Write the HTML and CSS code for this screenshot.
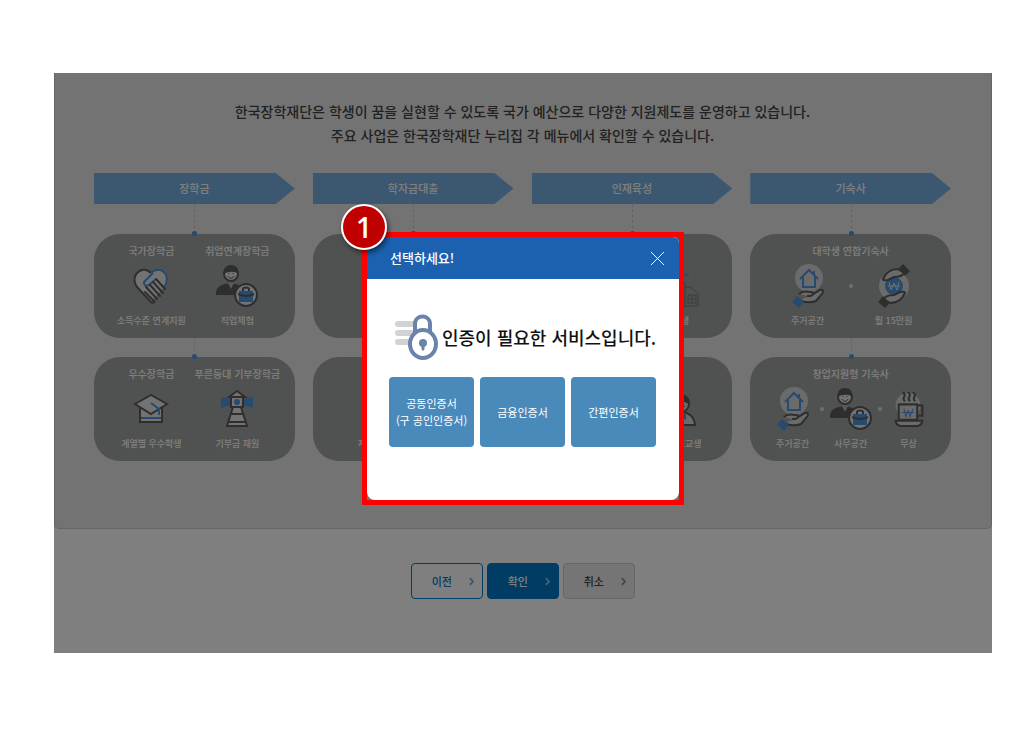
FILE: index.html
```
<!DOCTYPE html>
<html lang="ko">
<head>
    <meta charset="UTF-8">
    <meta name="viewport" content="width=device-width, initial-scale=1.0">
    <title>한국장학재단</title>
    <link rel="stylesheet" href="styles.css">
</head>
<body>
    <!-- Shared icons -->
    <svg class="sprite" aria-hidden="true">
        <symbol id="iconHeart" viewBox="0 0 36 36">
            <path d="M18 34 L4 19 C-1 12 2 4 9 2 C13 1 16 3 18 5 C20 3 23 1 27 2 C34 4 36 12 31 19 Z" fill="#e6e6e6"/>
            <path d="M18 5 C16 3 13 1 9 2 C2 4 -1 12 4 19 L18 34 Q20 36 22 33" fill="none" stroke="#5c5c5c" stroke-width="2"/>
            <path d="M18 5 C20 3 23 1 27 2 C34 4 36 12 31 19 M20 5 L11 14 C11 19 15 18 17 16 L23 11" fill="none" stroke="#4f96dc" stroke-width="2"/>
            <path d="M23 11 L32 21 M20 14 L30 25 M17 17 L27 28 M13 19 L24 31 M12 24 L21 33" fill="none" stroke="#5c5c5c" stroke-width="2" stroke-linecap="round"/>
        </symbol>
        <symbol id="iconWorker" viewBox="0 0 42 42">
            <path d="M0 30 V27 C1 21 6 19 14 18 C22 19 27 21 28 30 Z" fill="#5c5c5c"/>
            <circle cx="15" cy="9" r="7" fill="#e6e6e6" stroke="#5c5c5c" stroke-width="2"/>
            <path d="M8 9 C7 2 11 0 15 0 C20 0 23 3 22 9 C20 6 12 6 8 9 Z" fill="#5c5c5c"/>
            <path d="M12 11 C13 14 17 14 18 11 M13 8 V9 M17 8 V9" fill="none" stroke="#5c5c5c"/>
            <path d="M12 18 L15 24 L18 18 Z" fill="#b5b5b5"/>
            <circle cx="30" cy="30" r="11" fill="#e6e6e6" stroke="#5c5c5c" stroke-width="2"/>
            <path d="M23 26 H37 V37 H23 Z" fill="#4f96dc"/>
            <path d="M27 26 V24 C27 22 33 22 33 24 V26 M22 29 Q30 33 38 29" fill="none" stroke="#5c5c5c" stroke-width="2"/>
        </symbol>
        <symbol id="iconCap" viewBox="0 0 34 30">
            <path d="M6 13 V28 H28 V13" fill="#e6e6e6" stroke="#5c5c5c" stroke-width="2"/>
            <path d="M7 24 H27" stroke="#4f96dc" stroke-width="2"/>
            <path d="M1 10 L17 1 L33 10 L17 20 Z" fill="#e6e6e6" stroke="#5c5c5c" stroke-width="2"/>
            <path d="M17 9 L25 15 V21" fill="none" stroke="#4f96dc" stroke-width="2"/>
        </symbol>
        <symbol id="iconLight" viewBox="0 0 32 38">
            <path d="M0 7 L9 9 V15 L0 18 Z M32 7 L23 9 V15 L32 18 Z" fill="#4f96dc"/>
            <path d="M12 17 H20 L26 36 H6 Z" fill="#e6e6e6" stroke="#5c5c5c" stroke-width="2"/>
            <path d="M10 24 H22 M8 32 H24" stroke="#5c5c5c" stroke-width="2"/>
            <path d="M10 7 H22 V17 H10 Z M8 7 L16 1 L24 7 Z" fill="#e6e6e6" stroke="#5c5c5c" stroke-width="2"/>
            <circle cx="16" cy="12" r="3" fill="#4f96dc"/>
        </symbol>
        <symbol id="iconHouse" viewBox="0 0 32 44">
            <circle cx="17" cy="14" r="14" fill="#d6d6d6"/>
            <path d="M8 15 L17 6 L26 15 M11 13 V23 H23 V13 M22 10 V7" fill="none" stroke="#4f96dc" stroke-width="2"/>
            <path d="M7 30 C11 26 15 28 19 28 C22 28 22 31 18 32 H15 M20 31 L28 26 C31 25 32 27 30 30 L24 37 C20 39 15 38 12 38 L8 36" fill="#d6d6d6" stroke="#5c5c5c" stroke-width="2"/>
            <path d="M0 38 L5 32 L12 38 L7 44 Z" fill="#4f96dc"/>
        </symbol>
        <symbol id="iconWon" viewBox="0 0 32 44">
            <circle cx="16" cy="22" r="15" fill="#d6d6d6"/>
            <circle cx="16" cy="22" r="9" fill="#4f96dc"/>
            <path d="M11 18 L13 26 L16 19 L19 26 L21 18 M10 22 H22" fill="none" stroke="#e0e0e0" stroke-width="1"/>
            <path d="M5 15 C9 6 15 5 20 5 L26 9 C24 13 19 13 16 13 L10 16 Q5 17 5 15 Z" fill="#d6d6d6" stroke="#5c5c5c" stroke-width="2"/>
            <path d="M27 29 C23 38 17 39 12 39 L6 35 C8 31 13 31 16 31 L22 28 Q27 27 27 29 Z" fill="#d6d6d6" stroke="#5c5c5c" stroke-width="2"/>
            <path d="M21 4 L25 0 L32 7 L27 12 Z M11 40 L7 44 L0 38 L5 32 Z" fill="#5c5c5c"/>
        </symbol>
        <symbol id="iconCup" viewBox="0 0 28 36">
            <circle cx="13" cy="14" r="12" fill="#d6d6d6"/>
            <path d="M8 1 Q11 4 9 6 Q8 8 10 10 M13 1 Q16 4 14 6 Q13 8 15 10 M18 1 Q21 4 19 6 Q18 8 20 10" fill="none" stroke="#5c5c5c" stroke-width="2"/>
            <path d="M22 14 H27 V24 H22" fill="none" stroke="#5c5c5c" stroke-width="2"/>
            <path d="M4 13 H22 V28 H4 Z M1 29 H27 Q26 34 22 34 H6 Q2 34 1 29 Z" fill="#d6d6d6" stroke="#5c5c5c" stroke-width="2"/>
            <path d="M9 17 L11 25 L13 19 L15 25 L18 17 M7 21 H19" fill="none" stroke="#4f96dc" stroke-width="1"/>
        </symbol>
        <symbol id="iconSchool" viewBox="0 0 36 36">
            <path d="M1 35 V22 L9 16 M35 35 V22 L27 16 H22 M1 35 H35 M10 35 V13 L18 8 L22 12 V35" fill="none" stroke="#777"/>
            <path d="M18 8 V1 L26 4 L18 6" fill="none" stroke="#4f96dc"/>
            <path d="M25 24 H33 V32 H25 Z M25 28 H33 M29 24 V32" fill="none" stroke="#777"/>
        </symbol>
        <symbol id="iconStudent" viewBox="0 0 30 32">
            <path d="M1 31 Q1 19 15 18 Q28 19 29 31 Z" fill="#d6d6d6" stroke="#5c5c5c" stroke-width="2"/>
            <circle cx="15" cy="10" r="8" fill="#d6d6d6" stroke="#5c5c5c" stroke-width="2"/>
            <path d="M6 10 C5 -3 25 -3 24 10 Q17 8 14 5 Q11 9 6 10 Z" fill="#5c5c5c"/>
            <path d="M11 12 Q15 17 19 12" fill="none" stroke="#5c5c5c"/>
            <path d="M10 19 L15 23 L20 19 V26 L15 23 L10 26 Z" fill="#4f96dc"/>
        </symbol>
    </svg>

    <div class="screen">
        <!-- Support programs -->
        <main class="panel">
            <p class="intro">한국장학재단은 학생이 꿈을 실현할 수 있도록 국가 예산으로 다양한 지원제도를 운영하고 있습니다.<br>주요 사업은 한국장학재단 누리집 각 메뉴에서 확인할 수 있습니다.</p>

            <div class="programs">
                <section class="program">
                    <h2>장학금</h2>
                    <div class="card two">
                        <div class="item"><b>국가장학금</b><svg class="icon heart"><use href="#iconHeart"/></svg><span>소득수준 연계지원</span></div>
                        <div class="item"><b>취업연계장학금</b><svg class="icon"><use href="#iconWorker"/></svg><span>직업체험</span></div>
                    </div>
                    <div class="card two">
                        <div class="item"><b>우수장학금</b><svg class="icon cap"><use href="#iconCap"/></svg><span>계열별 우수학생</span></div>
                        <div class="item"><b>푸른등대 기부장학금</b><svg class="icon light"><use href="#iconLight"/></svg><span>기부금 재원</span></div>
                    </div>
                </section>
                <section class="program">
                    <h2>학자금대출</h2>
                    <div class="card"></div>
                    <div class="card two">
                        <div class="item"><span>저금리</span></div>
                        <div class="item"></div>
                    </div>
                </section>
                <section class="program">
                    <h2>인재육성</h2>
                    <div class="card two wide">
                        <div class="item"></div>
                        <div class="item"><svg class="icon school"><use href="#iconSchool"/></svg><span>학생</span></div>
                    </div>
                    <div class="card two wide">
                        <div class="item"></div>
                        <div class="item"><svg class="icon student"><use href="#iconStudent"/></svg><span>초중고교생</span></div>
                    </div>
                </section>
                <section class="program">
                    <h2>기숙사</h2>
                    <div class="card">
                        <b>대학생 연합기숙사</b>
                        <div class="icons pair">
                            <div class="item"><svg class="icon"><use href="#iconHouse"/></svg><span>주거공간</span></div>
                            <i class="dot"></i>
                            <div class="item"><svg class="icon"><use href="#iconWon"/></svg><span>월 15만원</span></div>
                        </div>
                    </div>
                    <div class="card">
                        <b>창업지원형 기숙사</b>
                        <div class="icons">
                            <div class="item"><svg class="icon"><use href="#iconHouse"/></svg><span>주거공간</span></div>
                            <i class="dot"></i>
                            <div class="item"><svg class="icon"><use href="#iconWorker"/></svg><span>사무공간</span></div>
                            <i class="dot"></i>
                            <div class="item"><svg class="icon cup"><use href="#iconCup"/></svg><span>무상</span></div>
                        </div>
                    </div>
                </section>
            </div>
        </main>

        <div class="actions">
            <button type="button" class="prev">이전<svg viewBox="0 0 6 10"><path d="M1 1 L5 5 L1 9"/></svg></button>
            <button type="button" class="ok">확인<svg viewBox="0 0 6 10"><path d="M1 1 L5 5 L1 9"/></svg></button>
            <button type="button" class="cancel">취소<svg viewBox="0 0 6 10"><path d="M1 1 L5 5 L1 9"/></svg></button>
        </div>

        <!-- Certificate popup -->
        <div class="overlay">
            <div class="frame">
                <span class="badge">1</span>
                <div class="popup" role="dialog" aria-labelledby="popupTitle">
                    <div class="popup-head">
                        <h1 id="popupTitle">선택하세요!</h1>
                        <button type="button" class="close" aria-label="닫기"><svg viewBox="0 0 16 16"><path d="M1 1 L15 15 M15 1 L1 15"/></svg></button>
                    </div>
                    <div class="popup-body">
                        <p class="notice">
                            <svg class="lock" viewBox="0 0 44 46">
                                <path d="M4 10 H24 M4 19 H24 M4 28 H24" stroke="#d2d2d2" stroke-width="6" stroke-linecap="round"/>
                                <path d="M21 20 V10 C21 0 36 0 36 10 V20" fill="#fff" stroke="#6a83ab" stroke-width="4"/>
                                <ellipse cx="29" cy="30" rx="13" ry="14" fill="#fff" stroke="#6a83ab" stroke-width="4"/>
                                <circle cx="29" cy="29" r="4" fill="#6a83ab"/>
                                <path d="M29 30 V35" stroke="#6a83ab" stroke-width="3" stroke-linecap="round"/>
                            </svg>
                            인증이 필요한 서비스입니다.
                        </p>
                        <div class="certs">
                            <button type="button">공동인증서<br>(구 공인인증서)</button>
                            <button type="button">금융인증서</button>
                            <button type="button">간편인증서</button>
                        </div>
                    </div>
                </div>
            </div>
        </div>
    </div>
</body>
</html>
```
FILE: styles.css
```
/* Global styles */
* {
    box-sizing: border-box;
}
body {
    margin: 0;
    padding: 73px 41px 95px 54px;
    background: #fff;
    color: #444;
    font-family: "Noto Sans CJK KR", sans-serif;
}
h1, h2, p {
    margin: 0;
}
button {
    padding: 0;
    font-family: inherit;
    cursor: pointer;
}
.sprite {
    position: absolute;
    width: 0;
    height: 0;
}
.screen {
    position: relative;
}

/* Program panel */
.panel {
    padding: 26px 40px 67px 39px;
    background: #e6e6e6;
    border: 1px solid #ccc;
    border-top: 0;
    border-radius: 0 0 5px 5px;
}
.intro {
    font-size: 14px;
    font-weight: 500;
    line-height: 24px;
    text-align: center;
}
.programs {
    display: grid;
    grid-template-columns: repeat(4, 1fr);
    gap: 18px;
    margin-top: 26px;
}
.program h2 {
    height: 31px;
    background: #78b0e0;
    clip-path: polygon(0 0, calc(100% - 19px) 0, 100% 50%, calc(100% - 19px) 100%, 0 100%);
    color: #fff;
    font-size: 11px;
    font-weight: 500;
    line-height: 30px;
    text-align: center;
}
.card {
    position: relative;
    height: 104px;
    margin-top: 19px;
    padding-top: 9px;
    background: #a1a5a3;
    border-radius: 26px;
    color: #fff;
    font-size: 9px;
    font-weight: 500;
    line-height: 16px;
    text-align: center;
}
h2 + .card {
    margin-top: 30px;
}
.card::before {
    content: "";
    position: absolute;
    bottom: 100%;
    left: 50%;
    height: 19px;
    border-left: 1px dashed #c8c8c8;
}
h2 + .card::before {
    height: 30px;
}
.card::after {
    content: "";
    position: absolute;
    top: -3px;
    left: calc(50% - 2px);
    width: 5px;
    height: 5px;
    background: #4f96dc;
    border-radius: 50%;
}
.card b {
    display: block;
    font-size: 10px;
    font-weight: 500;
    white-space: nowrap;
}
.two {
    display: grid;
    grid-template-columns: 86px 86px;
    justify-content: center;
}
.wide {
    grid-template-columns: 98px 98px;
}
.item {
    display: flex;
    flex-direction: column;
    align-items: center;
    justify-content: flex-end;
    height: 86px;
    white-space: nowrap;
}
.icon {
    width: 42px;
    height: 44px;
    margin: auto 0;
}
.heart {
    height: 36px;
}
.school {
    height: 36px;
    margin: 0 0 6px;
}
.student {
    width: 30px;
    height: 32px;
    margin: 0 0 10px;
}
.cap {
    height: 30px;
}
.light {
    height: 38px;
}
.cup {
    height: 37px;
}
.icons {
    display: flex;
    align-items: center;
    justify-content: center;
    gap: 6px;
}
.icons .item {
    width: 42px;
    height: 70px;
}
.pair {
    gap: 20px;
}
.dot {
    width: 4px;
    height: 4px;
    margin-bottom: 16px;
    background: #e0e0e0;
    border-radius: 50%;
}

/* Page buttons */
.actions {
    display: flex;
    justify-content: center;
    gap: 4px;
    padding: 34px 0 54px;
}
.actions button {
    display: flex;
    align-items: center;
    justify-content: flex-end;
    gap: 17px;
    width: 72px;
    height: 36px;
    padding-right: 8px;
    border: 1px solid #0078c8;
    border-radius: 4px;
    background: #fff;
    color: #0078c8;
    font-size: 11px;
    font-weight: 500;
}
.actions svg {
    width: 5px;
    height: 9px;
    fill: none;
    stroke: currentColor;
    stroke-width: 2;
    opacity: 0.6;
}
.actions .ok {
    background: #0078c8;
    color: #fff;
}
.actions .cancel {
    background: #ebebeb;
    border-color: #ccc;
    color: #444;
}

/* Popup */
.overlay {
    position: absolute;
    inset: 0;
    display: flex;
    align-items: flex-start;
    justify-content: center;
    padding-top: 159px;
    background: rgba(0, 0, 0, 0.5);
}
.frame {
    position: relative;
    border: 5px solid #f00;
    border-radius: 1px;
}
.popup {
    width: 312px;
    padding-bottom: 53px;
    background: #fff;
    border-radius: 0 6px 8px 8px;
    overflow: hidden;
}
.popup-head {
    display: flex;
    align-items: center;
    justify-content: space-between;
    height: 42px;
    padding: 0 14px 0 23px;
    background: #1b61b0;
    color: #fff;
}
.popup-head h1 {
    font-size: 13px;
    font-weight: 500;
    line-height: 42px;
}
.close {
    width: 15px;
    height: 15px;
    border: 0;
    background: none;
}
.close svg {
    display: block;
    fill: none;
    stroke: #fff;
}
.popup-body {
    padding: 35px 23px 0 22px;
}
.notice {
    display: flex;
    align-items: center;
    gap: 4px;
    margin-left: 5px;
    color: #111;
    font-size: 18px;
    font-weight: 500;
    line-height: 46px;
    white-space: nowrap;
}
.lock {
    flex: none;
    width: 44px;
    height: 46px;
}
.certs {
    display: grid;
    grid-template-columns: repeat(3, 1fr);
    gap: 6px;
    margin-top: 17px;
}
.certs button {
    height: 70px;
    border: 0;
    border-radius: 4px;
    background: #4a8abb;
    color: #fff;
    font-size: 11px;
    line-height: 17px;
}
.badge {
    position: absolute;
    top: -33px;
    left: -26px;
    width: 46px;
    height: 46px;
    border: 2px solid #fff;
    border-radius: 50%;
    background: #c00000;
    box-shadow: 2px 3px 5px rgba(0, 0, 0, 0.5);
    color: #fff;
    font-family: "Open Sans", sans-serif;
    font-size: 28px;
    font-weight: 600;
    line-height: 42px;
    text-align: center;
}
```
